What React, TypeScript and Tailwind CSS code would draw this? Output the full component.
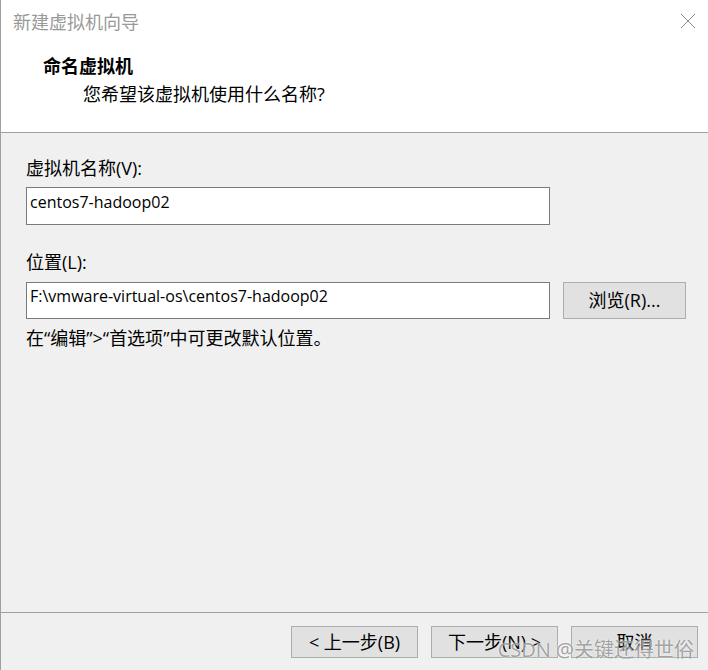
import React from 'react';

const Mixed: React.FC<{ text: string }> = ({ text }) => (
  <span>
    {text
      .split(/([\u3000-\u303f\u4e00-\u9fff\uff00-\uffef]+)/)
      .filter(Boolean)
      .map((part, i) =>
        /[\u3000-\u303f\u4e00-\u9fff\uff00-\uffef]/.test(part) ? (
          <span key={i} className="text-[18px]">
            {part}
          </span>
        ) : (
          <span key={i} className="text-[18px] whitespace-pre">
            {part}
          </span>
        ),
      )}
  </span>
);

const Field: React.FC<{ value: string; className?: string }> = ({ value, className = '' }) => (
  <div
    className={`w-[524px] border border-[#7a7a7a] bg-white px-[3px] text-[16px] leading-[22px] text-black ${className}`}
  >
    {value}
  </div>
);

const Button: React.FC<{ label: string; className?: string }> = ({ label, className = '' }) => (
  <div
    className={`flex items-center justify-center border border-[#adadad] bg-[#e1e1e1] text-black leading-[22px] ${className}`}
  >
    <Mixed text={label} />
  </div>
);

const App = () => (
  <div
    className="relative flex h-[670px] w-[708px] flex-col border-l border-[#a0a0a0] bg-[#f0f0f0]"
    style={{ fontFamily: '"Open Sans", "Noto Sans CJK SC", sans-serif' }}
  >
    {/* title + header */}
    <div className="h-[133px] shrink-0 border-b border-[#a0a0a0] bg-white">
      <div className="flex items-start justify-between pl-[12px] pr-[12px] pt-[10px]">
        <div className="text-[18px] leading-[24px] text-[#999]">新建虚拟机向导</div>
        <svg width="16" height="16" viewBox="0 0 16 16" className="mt-[3px]">
          <path d="M1 1L15 15M15 1L1 15" stroke="#8a8a8a" strokeWidth="1" fill="none" />
        </svg>
      </div>
      <div className="pl-[42px] pt-[20px] text-[18px] font-bold leading-[24px] text-black">命名虚拟机</div>
      <div className="pl-[82px] pt-[4px] leading-[24px] text-black">
        <Mixed text="您希望该虚拟机使用什么名称?" />
      </div>
    </div>

    {/* body */}
    <div className="flex flex-1 flex-col pl-[25px] pt-[23px] text-black">
      <div className="leading-[24px]">
        <Mixed text="虚拟机名称(V):" />
      </div>
      <div className="mt-[6px]">
        <Field value="centos7-hadoop02" className="h-[38px] pt-[3px]" />
      </div>
      <div className="mt-[25px] leading-[24px]">
        <Mixed text="位置(L):" />
      </div>
      <div className="mt-[7px] flex items-start">
        <Field value="F:\vmware-virtual-os\centos7-hadoop02" className="h-[37px] pt-[2px]" />
        <Button label="浏览(R)..." className="ml-[13px] h-[37px] w-[123px]" />
      </div>
      <div className="mt-[7px] leading-[24px]">
        <Mixed text="在“编辑”>“首选项”中可更改默认位置。" />
      </div>
    </div>

    {/* footer */}
    <div className="flex h-[58px] shrink-0 justify-end gap-[13px] border-t border-[#a0a0a0] pr-[10px] pt-[13px]">
      <Button label="< 上一步(B)" className="h-[32px] w-[127px]" />
      <Button label="下一步(N) >" className="h-[32px] w-[127px]" />
      <Button label="取消" className="h-[32px] w-[127px]" />
    </div>

    {/* watermark */}
    <div className="pointer-events-none absolute bottom-[8px] right-[14px] text-[20px] leading-[24px] text-[#8c8c8c]/80 [text-shadow:0_0_2px_#fff]">
      CSDN @关键还得世俗
    </div>
  </div>
);

export default App;
